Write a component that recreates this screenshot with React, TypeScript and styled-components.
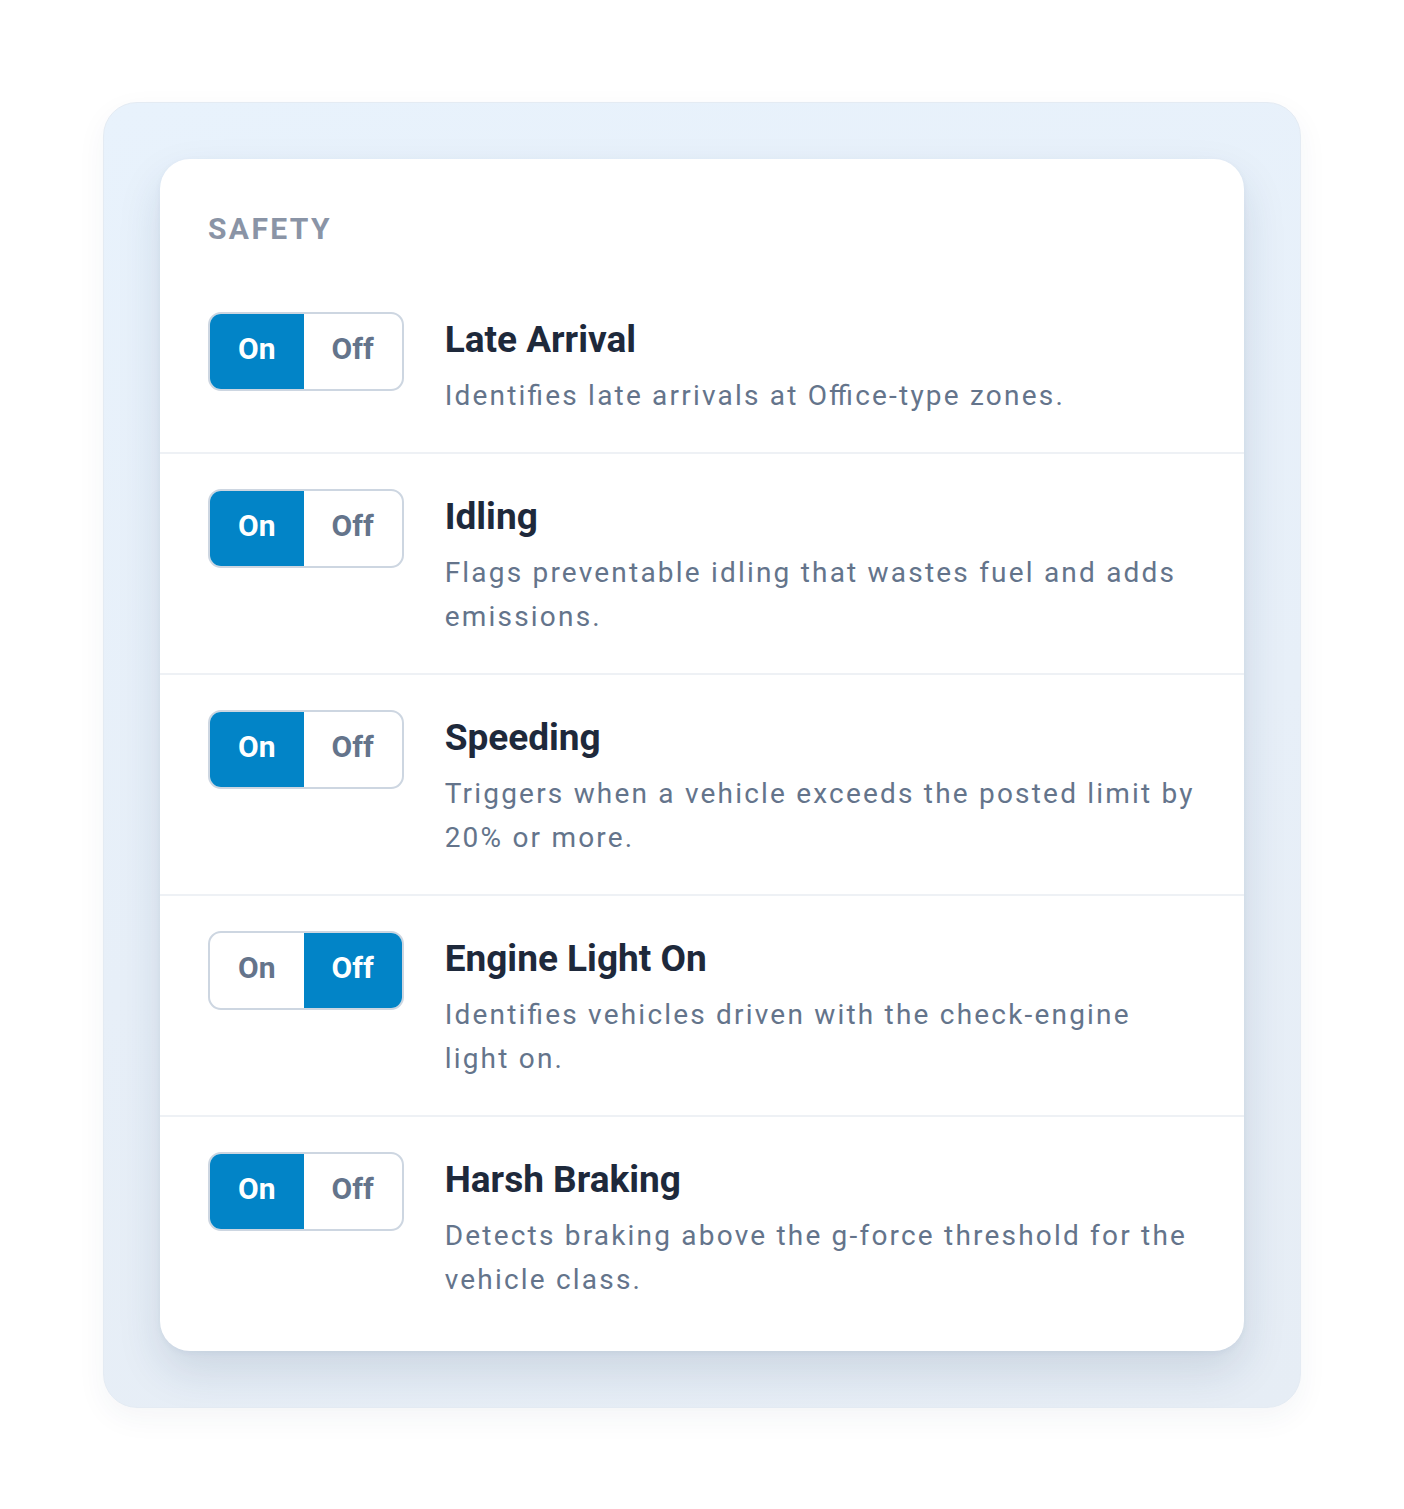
import React from 'react';
import styled, { createGlobalStyle } from 'styled-components';

const GlobalStyle = createGlobalStyle`
  html, body {
    margin: 0;
    padding: 0;
    background: #ffffff;
  }
  body {
    font-family: Roboto, "Liberation Sans", sans-serif;
    -webkit-font-smoothing: antialiased;
  }
`;

const Page = styled.div`
  display: flex;
  justify-content: center;
  padding: 102px 103px 103px;
`;

const Frame = styled.div`
  width: 100%;
  box-sizing: border-box;
  padding: 56px;
  border-radius: 34px;
  border: 1px solid #e4ebf3;
  background: linear-gradient(165deg, #e8f2fc 0%, #e7eff8 55%, #e6edf5 100%);
  box-shadow: 0 10px 30px rgba(30, 60, 100, 0.05);
`;

const Card = styled.section`
  background: #ffffff;
  border-radius: 30px;
  padding: 52px 0 15px;
  box-shadow: 0 20px 44px rgba(25, 55, 95, 0.13), 0 2px 6px rgba(25, 55, 95, 0.05);
`;

const Heading = styled.h2`
  margin: 0 0 30px;
  padding: 0 48px;
  font-size: 30px;
  line-height: 36px;
  font-weight: 700;
  letter-spacing: 2.4px;
  color: #8a94a6;
`;

const Row = styled.div`
  display: flex;
  align-items: flex-start;
  gap: 41px;
  padding: 35px 44px 34px 48px;
  & + & {
    border-top: 2px solid #eef1f5;
  }
`;

const Toggle = styled.div`
  display: flex;
  flex-shrink: 0;
  height: 79px;
  box-sizing: border-box;
  border: 2px solid #cdd6e1;
  border-radius: 13px;
  overflow: hidden;
  background: #ffffff;
`;

const Segment = styled.button<{ $active: boolean }>`
  border: none;
  margin: 0;
  padding: 0 28px 7px;
  font-family: inherit;
  font-size: 30px;
  font-weight: 700;
  cursor: pointer;
  background: ${(p) => (p.$active ? '#0284c7' : 'transparent')};
  color: ${(p) => (p.$active ? '#ffffff' : '#64748b')};
`;

const Body = styled.div`
  flex: 1;
  min-width: 0;
  max-width: 756px;
`;

const Title = styled.h3`
  margin: 0 0 7px;
  font-size: 37px;
  line-height: 55px;
  font-weight: 700;
  color: #1e293b;
`;

const Description = styled.p`
  margin: 0;
  font-size: 28px;
  line-height: 44px;
  letter-spacing: 2.2px;
  font-feature-settings: "liga" 1;
  color: #64748b;
`;

type Rule = { title: string; text: string; on: boolean };

const rules: Rule[] = [
  { title: 'Late Arrival', text: 'Identifies late arrivals at Office-type zones.', on: true },
  { title: 'Idling', text: 'Flags preventable idling that wastes fuel and adds emissions.', on: true },
  { title: 'Speeding', text: 'Triggers when a vehicle exceeds the posted limit by 20% or more.', on: true },
  { title: 'Engine Light On', text: 'Identifies vehicles driven with the check-engine light on.', on: false },
  { title: 'Harsh Braking', text: 'Detects braking above the g-force threshold for the vehicle class.', on: true },
];

const App: React.FC = () => {
  const [state, setState] = React.useState(rules.map((r) => r.on));

  const set = (i: number, v: boolean) =>
    setState((s) => s.map((x, j) => (j === i ? v : x)));

  return (
    <Page>
      <GlobalStyle />
      <Frame>
        <Card>
          <Heading>SAFETY</Heading>
          {rules.map((r, i) => (
            <Row key={r.title}>
              <Toggle>
                <Segment $active={state[i]} onClick={() => set(i, true)}>On</Segment>
                <Segment $active={!state[i]} onClick={() => set(i, false)}>Off</Segment>
              </Toggle>
              <Body>
                <Title>{r.title}</Title>
                <Description>{r.text}</Description>
              </Body>
            </Row>
          ))}
        </Card>
      </Frame>
    </Page>
  );
};

export default App;
